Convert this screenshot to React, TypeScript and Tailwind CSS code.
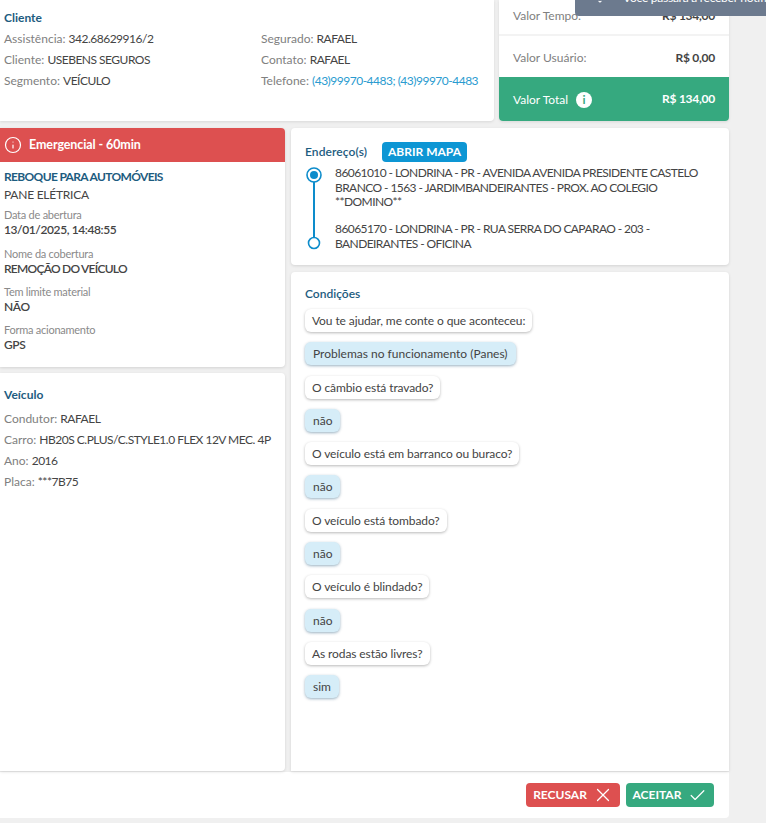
import React from 'react';
import { Info, X, Check, Bell } from 'lucide-react';

const Field = ({ label, value }: { label: string; value: React.ReactNode }) => (
  <div className="h-[21px] leading-[21px] whitespace-nowrap">
    <span className="text-[#808080] tracking-normal">{label}: </span>
    <span className="text-[#444] tracking-[-0.5px]">{value}</span>
  </div>
);

const Detail = ({ label, value, first, tight }: { label: string; value: string; first?: boolean; tight?: boolean }) => (
  <div className={first ? 'mt-[3px]' : 'mt-[8px]'}>
    <div className="text-[11px] leading-[15px] text-[#8a8a8a]">{label}</div>
    <div className={`text-[12px] leading-[15px] font-semibold text-[#444] ${tight ? 'tracking-[-0.75px]' : 'tracking-[-0.4px]'}`}>{value}</div>
  </div>
);

const Question = ({ text }: { text: string }) => (
  <div className="self-start h-[23px] leading-[23px] px-[7px] rounded-md bg-white text-[#444] tracking-[-0.1px] shadow-[0_1px_3px_rgba(0,0,0,0.28)]">{text}</div>
);

const Answer = ({ text }: { text: string }) => (
  <div className="self-start h-[23px] leading-[23px] px-[8px] rounded-md bg-[#d6edf8] text-[#444] tracking-normal shadow-[0_1px_3px_rgba(0,60,100,0.4)]">{text}</div>
);

const conditions = [
  ['Vou te ajudar, me conte o que aconteceu:', 'Problemas no funcionamento (Panes)'],
  ['O câmbio está travado?', 'não'],
  ['O veículo está em barranco ou buraco?', 'não'],
  ['O veículo está tombado?', 'não'],
  ['O veículo é blindado?', 'não'],
  ['As rodas estão livres?', 'sim'],
];

export default function App() {
  return (
    <div className="relative w-[766px] h-[823px] overflow-hidden bg-[#f0f0f0] text-[12px] tracking-[-0.25px] font-['Lato','Noto_Sans',sans-serif]">
      {/* toast cut off by the top of the window */}
      <div className="absolute left-[575px] -top-[20px] w-[191px] h-[36px] bg-[#6c7a8e] rounded-bl flex items-center overflow-hidden pl-[18px] text-white text-[12px] z-10">
        <Bell size={14} className="shrink-0 -translate-y-[2px]" fill="white" />
        <span className="ml-[16px] whitespace-nowrap">Você passará a receber notificações</span>
      </div>

      <div className="w-[729px]">
        <div className="flex gap-[5px] h-[121px]">
          <div className="w-[494px] bg-white rounded-br shadow-[0_1px_3px_rgba(0,0,0,0.1)] pl-[4px] pt-[9px]">
            <div className="font-bold text-[#1d5c80] tracking-normal leading-[17px] mb-[2px]">Cliente</div>
            <div className="flex">
              <div className="w-[257px] shrink-0">
                <Field label="Assistência" value="342.68629916/2" />
                <Field label="Cliente" value="USEBENS SEGUROS" />
                <Field label="Segmento" value="VEÍCULO" />
              </div>
              <div>
                <Field label="Segurado" value="RAFAEL" />
                <Field label="Contato" value="RAFAEL" />
                <Field label="Telefone" value={<span className="text-[#2a9bd0]">(43)99970-4483; (43)99970-4483</span>} />
              </div>
            </div>
          </div>
          <div className="w-[230px] flex flex-col rounded-b overflow-hidden bg-white tracking-normal shadow-[0_1px_3px_rgba(0,0,0,0.1)]">
            <div className="h-[36px] border-b-2 border-[#f3f3f3] flex justify-between items-center px-[14px] pb-[3px]">
              <span className="text-[#808080]">Valor Tempo:</span>
              <span className="font-bold text-[#444] tracking-[-0.25px]">R$ 134,00</span>
            </div>
            <div className="h-[41px] flex justify-between items-center px-[14px] pt-[3px]">
              <span className="text-[#808080]">Valor Usuário:</span>
              <span className="font-bold text-[#444] tracking-[-0.25px]">R$ 0,00</span>
            </div>
            <div className="flex-1 bg-[#36a97f] text-white flex justify-between items-center px-[14px]">
              <span className="flex items-center gap-[8px] pt-[2px]">
                Valor Total
                <span className="w-[16px] h-[16px] rounded-full bg-white text-[#36a97f] flex items-center justify-center text-[12px] font-bold leading-none">i</span>
              </span>
              <span className="font-bold tracking-[-0.25px]">R$ 134,00</span>
            </div>
          </div>
        </div>

        <div className="flex gap-[6px] mt-[7px] h-[643px]">
          <div className="w-[285px] flex flex-col gap-[6px]">
            <div className="h-[239px] bg-white rounded-r shadow-[0_1px_3px_rgba(0,0,0,0.12)]">
              <div className="h-[34px] bg-[#dd5050] rounded-tr text-white text-[12.5px] tracking-[-0.1px] font-bold flex items-center pl-[4px] gap-[7px]">
                <Info size={18} strokeWidth={1.6} />
                Emergencial - 60min
              </div>
              <div className="px-[4px] pt-[6px]">
                <div className="font-bold text-[#1d5c80] tracking-[-0.65px] leading-[18px]">REBOQUE PARA AUTOMÓVEIS</div>
                <div className="text-[#444] leading-[18px]">PANE ELÉTRICA</div>
                <Detail first label="Data de abertura" value="13/01/2025, 14:48:55" />
                <div className="h-[1px]" />
                <Detail tight label="Nome da cobertura" value="REMOÇÃO DO VEÍCULO" />
                <Detail label="Tem limite material" value="NÃO" />
                <Detail label="Forma acionamento" value="GPS" />
              </div>
            </div>
            <div className="flex-1 bg-white rounded-r shadow-[0_1px_3px_rgba(0,0,0,0.12)] pl-[4px] pt-[13px]">
              <div className="font-bold text-[#1d5c80] tracking-normal leading-[17px] mb-[5px]">Veículo</div>
              <Field label="Condutor" value="RAFAEL" />
              <Field label="Carro" value="HB20S C.PLUS/C.STYLE1.0 FLEX 12V MEC. 4P" />
              <Field label="Ano" value="2016" />
              <Field label="Placa" value="***7B75" />
            </div>
          </div>

          <div className="flex-1 flex flex-col gap-[7px]">
            <div className="h-[137px] bg-white rounded shadow-[0_1px_3px_rgba(0,0,0,0.12)] pl-[14px] pt-[14px]">
              <div className="flex items-center h-[20px]">
                <span className="w-[77px] font-semibold text-[#1d5c80] tracking-[0.1px]">Endereço(s)</span>
                <span className="h-[20px] w-[85px] text-center rounded-sm bg-[#0d96d4] text-white font-bold leading-[20px] tracking-normal">ABRIR MAPA</span>
              </div>
              <div className="flex mt-[3px]">
                <div className="w-[18px] shrink-0 mr-[12px] pt-[2px]">
                  <svg width="18" height="84" viewBox="0 0 18 84" fill="none">
                    <line x1="9" y1="14" x2="9" y2="72" stroke="#0d8ccb" strokeWidth="2" />
                    <circle cx="9" cy="8" r="7" stroke="#0d8ccb" strokeWidth="1.6" fill="white" />
                    <circle cx="9" cy="8" r="4" fill="#0d8ccb" />
                    <circle cx="9" cy="76" r="5.5" stroke="#0d8ccb" strokeWidth="1.6" fill="white" />
                  </svg>
                </div>
                <div className="text-[#444] pt-[1px] leading-[14.7px] tracking-[-0.58px] w-[385px]">
                  <div>86061010 - LONDRINA - PR - AVENIDA AVENIDA PRESIDENTE CASTELO BRANCO - 1563 - JARDIMBANDEIRANTES - PROX. AO COLEGIO **DOMINO**</div>
                  <div className="mt-[12px]">86065170 - LONDRINA - PR - RUA SERRA DO CAPARAO - 203 - BANDEIRANTES - OFICINA</div>
                </div>
              </div>
            </div>
            <div className="flex-1 bg-white rounded-t shadow-[0_1px_3px_rgba(0,0,0,0.12)] pl-[14px] pt-[14px]">
              <div className="font-semibold text-[#1d5c80] tracking-normal leading-[16px] mb-[7px]">Condições</div>
              <div className="flex flex-col gap-[10.3px]">
                {conditions.map(([q, a]) => (
                  <React.Fragment key={q}>
                    <Question text={q} />
                    <Answer text={a} />
                  </React.Fragment>
                ))}
              </div>
            </div>
          </div>
        </div>

        <div className="h-[47px] bg-white border-t border-[#eee] rounded-br flex items-center justify-end gap-[6px] pr-[15px]">
          <button className="h-[24px] w-[94px] rounded bg-[#dd5050] text-white font-bold flex items-center justify-center tracking-normal">
            RECUSAR <X size={22} strokeWidth={1.3} className="ml-[5px] -mr-[1px]" />
          </button>
          <button className="h-[24px] w-[88px] rounded bg-[#36a97f] text-white font-bold flex items-center justify-center tracking-normal">
            ACEITAR <Check size={19} strokeWidth={1.5} className="ml-[7px]" />
          </button>
        </div>
      </div>
    </div>
  );
}
